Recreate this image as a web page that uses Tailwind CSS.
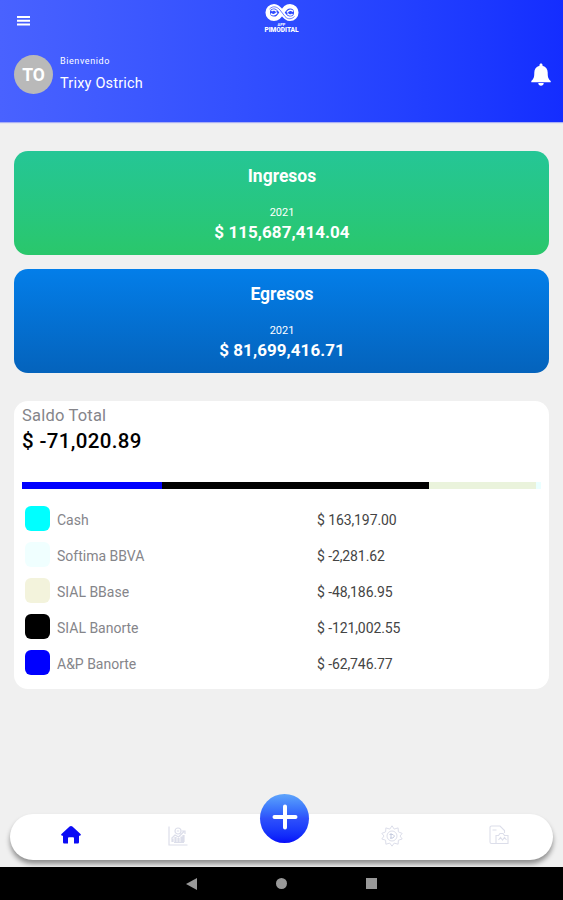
<!DOCTYPE html>
<html lang="es">
<head>
    <meta charset="UTF-8">
    <meta name="viewport" content="width=device-width, initial-scale=1.0">
    <title>Inicio</title>
    <script src="https://cdn.jsdelivr.net/npm/@tailwindcss/browser@4"></script>
</head>
<body class="flex flex-col h-[900px] overflow-hidden bg-[#f0f0f0] font-[Roboto,sans-serif]">

    <!-- Header -->
    <header class="h-[122px] shrink-0 bg-linear-to-r from-[#4962ff] to-[#142dff] text-white shadow-[0_1px_1px_#aab0f5]">
        <div class="grid grid-cols-3 h-[42px] pl-4 pr-4">
            <button class="flex items-center w-5" aria-label="Menu">
                <svg class="w-[13px] h-[10px] ml-[1px]" viewBox="0 0 13 10" fill="currentColor">
                    <path d="M0 0h13v2H0zM0 3.8h13v2H0zM0 7.6h13v2H0z"/>
                </svg>
            </button>
            <div class="flex flex-col items-center pt-[3px]">
                <svg class="w-[34px] h-[19px]" viewBox="0 0 34 19" fill="none" stroke="currentColor">
                    <path stroke-width="4.500" d="M17 9.500C14 14 12.500 15.800 9 15.800a6.300 6.300 0 0 1 0-12.600c4 0 6 3.300 8 6.300s4 6.300 8 6.300a6.300 6.300 0 0 0 0-12.600c-3.500 0-5 2-8 6.300z"/>
                    <path stroke-width="1.600" d="M6 10.500c1.500 2 4 1.500 6-1M6.500 8c1.500-1.500 3.500-1.500 5 .5M28 8.500c-1.500-2-4-1.500-6 1M27.500 11c-1.500 1.500-3.500 1.500-5-.5"/>
                    <path stroke="#3048ff" stroke-width=".7" d="M4.500 6C8 2.500 12 3.500 15 7l5 6.500c3 3.500 7 2.500 9.500 0"/>
                </svg>
                <span class="text-[4px] leading-[4px] mt-px font-bold">APP</span>
                <span class="text-[6.500px] leading-[6px] font-black">PIMODITAL</span>
            </div>
        </div>
        <div class="flex items-center h-16 pl-[14px] pr-3">
            <div class="flex items-center justify-center size-[39px] rounded-full bg-[#b9b9b9] text-[17.5px] font-bold pt-[2px]">TO</div>
            <div class="flex flex-col ml-[7px]">
                <span class="text-[9px] leading-3 tracking-[.6px]">Bienvenido</span>
                <span class="text-[14.5px] leading-5 mt-[7px] tracking-[.2px]">Trixy Ostrich</span>
            </div>
            <svg class="w-5 h-[23px] ml-auto" viewBox="0 0 20 23" fill="currentColor">
                <path d="M10 .5c1 0 1.500.7 1.500 1.500v.8c3.500.8 5.200 3.400 5.200 6.700 0 4.500.6 6.500 3 8.500v1.300H.3V18c2.400-2 3-4 3-8.500 0-3.300 1.700-5.900 5.200-6.700V2c0-.8.5-1.500 1.500-1.500zM7.300 20h5.400c0 1.700-1.200 2.700-2.700 2.700S7.300 21.700 7.300 20z"/>
            </svg>
        </div>
    </header>

    <main class="flex flex-col grow px-[14px] pt-[29px]">
        <!-- Totals -->
        <section class="h-[104px] shrink-0 rounded-[14px] bg-linear-to-b from-[#25c696] to-[#2ac76b] text-white text-center pt-[14px] pl-px">
            <h2 class="text-[17.500px] leading-[22px] font-bold">Ingresos</h2>
            <p class="text-[11px] leading-4 mt-[18px]">2021</p>
            <p class="text-[17px] leading-[22px] font-bold tracking-[.05px]">$ 115,687,414.04</p>
        </section>
        <section class="h-[104px] shrink-0 mt-[14px] rounded-[14px] bg-linear-to-b from-[#037ee9] to-[#0463bc] text-white text-center pt-[14px] pl-px">
            <h2 class="text-[17.500px] leading-[22px] font-bold">Egresos</h2>
            <p class="text-[11px] leading-4 mt-[18px]">2021</p>
            <p class="text-[17px] leading-[22px] font-bold tracking-[.05px]">$ 81,699,416.71</p>
        </section>

        <!-- Balance -->
        <section class="h-[288px] shrink-0 mt-7 rounded-[14px] bg-white px-2 pt-[5px]">
            <h3 class="text-[16.500px] leading-5 text-[#85858a] tracking-[.2px]">Saldo Total</h3>
            <p class="text-[20.500px] leading-[30px] font-medium text-black tracking-[.35px]">$ -71,020.89</p>
            <div class="flex h-[7px] mt-[26px]">
                <div class="w-[140px] bg-[#0000ff]"></div>
                <div class="w-[268px] bg-black"></div>
                <div class="w-[107px] bg-[#eaf3dc]"></div>
                <div class="w-[5px] bg-[#eaffff]"></div>
            </div>
            <ul class="mt-3 text-[14px]">
                <li class="flex items-center h-[35.900px] pl-[3px]">
                    <span class="size-[25px] rounded-[6px] bg-[#00ffff]"></span>
                    <span class="w-[260px] ml-[7px] pt-[3px] text-[#85858a]">Cash</span>
                    <span class="pt-[3px] text-[#444444] tracking-[-.1px]">$ 163,197.00</span>
                </li>
                <li class="flex items-center h-[35.900px] pl-[3px]">
                    <span class="size-[25px] rounded-[6px] bg-[#f0ffff]"></span>
                    <span class="w-[260px] ml-[7px] pt-[3px] text-[#85858a]">Softima BBVA</span>
                    <span class="pt-[3px] text-[#444444] tracking-[-.1px]">$ -2,281.62</span>
                </li>
                <li class="flex items-center h-[35.900px] pl-[3px]">
                    <span class="size-[25px] rounded-[6px] bg-[#f3f3dc]"></span>
                    <span class="w-[260px] ml-[7px] pt-[3px] text-[#85858a]">SIAL BBase</span>
                    <span class="pt-[3px] text-[#444444] tracking-[-.1px]">$ -48,186.95</span>
                </li>
                <li class="flex items-center h-[35.900px] pl-[3px]">
                    <span class="size-[25px] rounded-[6px] bg-black"></span>
                    <span class="w-[260px] ml-[7px] pt-[3px] text-[#85858a]">SIAL Banorte</span>
                    <span class="pt-[3px] text-[#444444] tracking-[-.1px]">$ -121,002.55</span>
                </li>
                <li class="flex items-center h-[35.900px] pl-[3px]">
                    <span class="size-[25px] rounded-[6px] bg-[#0000ff]"></span>
                    <span class="w-[260px] ml-[7px] pt-[3px] text-[#85858a]">A&amp;P Banorte</span>
                    <span class="pt-[3px] text-[#444444] tracking-[-.1px]">$ -62,746.77</span>
                </li>
            </ul>
        </section>
    </main>

    <!-- Tab bar -->
    <nav class="grid grid-cols-5 grid-rows-[46px] items-center h-[46px] shrink-0 mx-[10px] mb-[7px] pl-2 pr-px rounded-full bg-white text-[#dcdeea] shadow-[0_4px_5px_rgba(0,0,0,0.4)]">
        <a class="flex justify-center" aria-label="Inicio">
            <svg class="w-5 h-[18px] -mt-1" viewBox="0 0 20 18" fill="#0c0cf5">
                <path d="M10 0c.6 0 1 .2 1.400.6L19.500 8c.8.8.3 1.700-.6 1.700H18V16c0 1-.6 1.600-1.500 1.600H13v-5.100c0-.8-.4-1.200-1.200-1.200H8.200c-.8 0-1.200.4-1.200 1.200v5.100H3.500C2.600 17.600 2 17 2 16V9.700h-.9C.2 9.700-.3 8.800.5 8L8.600.6C9 .2 9.400 0 10 0z"/>
            </svg>
        </a>
        <a class="flex justify-center" aria-label="Reportes">
            <svg class="w-5 h-5 -mt-[2px]" viewBox="0 0 20 20" fill="none" stroke="currentColor" stroke-width="1.200">
                <path d="M1 .5V19h18.500"/>
                <path d="M4.500 16v-3.500M7.500 16v-5M10.500 16v-4M13.500 16v-5.500M15.500 16V9" stroke-width="2.200"/>
                <path d="M3.500 12.500L7 9l3.500 2L16 5.500M13.500 5H17v3"/>
                <circle cx="10" cy="5" r="3"/>
                <path d="M8.800 5h2.400M6 16.500h10"/>
            </svg>
        </a>
        <a class="flex justify-center -translate-y-[19px]" aria-label="Agregar">
            <span class="flex items-center justify-center size-[49px] shrink-0 rounded-full bg-linear-to-b from-[#5fa4fb] via-[#2f50fb] to-[#0808fa]">
                <svg class="size-[26px] -mt-[2px]" viewBox="0 0 26 26" stroke="white" stroke-width="4" stroke-linecap="round">
                    <path d="M13 2.500v21M2.500 13h21"/>
                </svg>
            </span>
        </a>
        <a class="flex justify-center" aria-label="Ajustes">
            <svg class="size-[22px] -mt-[3px]" viewBox="0 0 22 22" fill="none" stroke="currentColor" stroke-width="1">
                <path d="M11 .8l2.200 3.300 3.900-1.200.3 4 3.800 1.500L19 11l2.200 3-3.800 1.200-.3 4-3.900-1.100L11 21.200l-2.200-3.100-3.900 1.100-.3-4L.8 14 3 11 .8 8.400l3.800-1.500.3-4 3.900 1.200z"/>
                <circle cx="11" cy="11" r="5"/>
                <path d="M8.500 9.500h3.500l1.500 1.500-1.500 2H9M10 8v6" stroke="#c6ccdf"/>
            </svg>
        </a>
        <a class="flex justify-center" aria-label="Documentos">
            <svg class="size-5 -mt-1" viewBox="0 0 20 20" fill="none" stroke="currentColor" stroke-width="1.100">
                <path d="M7 18.500H2.500a1.500 1.500 0 0 1-1.500-1.500V2.500A1.500 1.500 0 0 1 2.500 1H11l4.500 4.500V8M3.500 5h4"/>
                <path d="M7 10.500h2.500l1.500-2h3l1.500 2h3.500v8H7z"/>
                <path d="M9.500 15l2-2.500 2 2.500 2-2.500 2 2.500"/>
            </svg>
        </a>
    </nav>

    <!-- System buttons -->
    <footer class="flex justify-center items-center gap-[79px] h-[33px] shrink-0 bg-black">
        <svg class="w-[11px] h-[12px]" viewBox="0 0 11 12" fill="#999"><path d="M11 0v12L0 6z"/></svg>
        <span class="size-[11px] rounded-full bg-[#999999]"></span>
        <span class="size-[11px] bg-[#999999]"></span>
    </footer>

</body>
</html>
